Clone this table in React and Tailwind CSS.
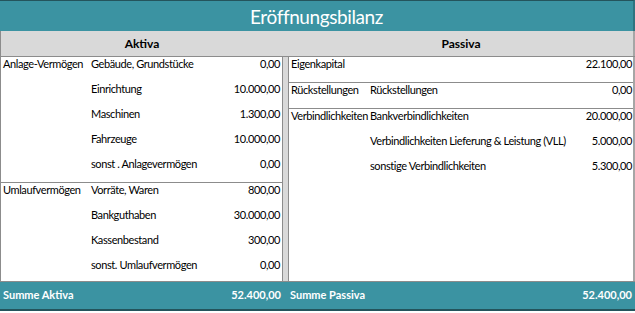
import React from "react";

const aktiva = [
  { group: "Anlage-Vermögen", items: [
    ["Gebäude, Grundstücke", "0,00"],
    ["Einrichtung", "10.000,00"],
    ["Maschinen", "1.300,00"],
    ["Fahrzeuge", "10.000,00"],
    ["sonst . Anlagevermögen", "0,00"],
  ]},
  { group: "Umlaufvermögen", items: [
    ["Vorräte, Waren", "800,00"],
    ["Bankguthaben", "30.000,00"],
    ["Kassenbestand", "300,00"],
    ["sonst. Umlaufvermögen", "0,00"],
  ]},
];

const passiva = [
  { group: "Eigenkapital", items: [["", "22.100,00"]] },
  { group: "Rückstellungen", items: [["Rückstellungen", "0,00"]] },
  { group: "Verbindlichkeiten", items: [
    ["Bankverbindlichkeiten", "20.000,00"],
    ["Verbindlichkeiten Lieferung & Leistung (VLL)", "5.000,00"],
    ["sonstige Verbindlichkeiten", "5.300,00"],
  ]},
];

export default function App() {
  return (
    <div className="w-[635px] h-[313px] bg-white text-[11px] text-black overflow-hidden" style={{ fontFamily: "Lato, 'Open Sans', sans-serif" }}>
      <div className="h-[31px] bg-[#3b93a2] border-t border-[#24545c] border-r-2 border-r-[#2f7480] flex items-center justify-center text-white text-[19px] tracking-[-0.4px] leading-none">
        Eröffnungsbilanz
      </div>
      <div className="h-[25px] bg-[#d9d9d9] flex items-center font-bold text-[12px] border-l border-[#8c8c8c] border-r-2 border-r-[#a6a6a6]">
        <div className="w-[282px] text-center">Aktiva</div>
        <div className="w-[6px]" />
        <div className="flex-1 text-center">Passiva</div>
      </div>
      <div className="h-[225px] flex border-t border-[#8c8c8c] bg-[#d9d9d9] tracking-[-0.4px]">
        <div className="w-[283px] bg-white border-l border-r border-[#8c8c8c] flex flex-col">
          {aktiva.map((g, i) => (
            <div key={i} className={"flex " + (i === 0 ? "" : "border-t border-[#8c8c8c]")}>
              <div className="shrink-0 w-[90px] pl-[2px] leading-[13px]">{g.group}</div>
              <div className="flex-1 flex flex-col">
                {g.items.map(([a, b], j) => (
                  <div key={j} className="h-[25px] flex justify-between leading-[13px] pr-[2px]">
                    <span>{a}</span>
                    <span>{b}</span>
                  </div>
                ))}
              </div>
            </div>
          ))}
        </div>
        <div className="w-[5px]" />
        <div className="flex-1 bg-white border-l border-[#8c8c8c] border-r-2 border-r-[#a6a6a6] flex flex-col">
          {passiva.map((g, i) => (
            <div key={i} className={"flex " + (i === 0 ? "" : "border-t border-[#8c8c8c]")}>
              <div className="shrink-0 w-[81px] pl-[2px] leading-[13px]">{g.group}</div>
              <div className="flex-1 flex flex-col">
                {g.items.map(([a, b], j) => (
                  <div key={j} className="h-[25px] flex justify-between leading-[13px] pr-[1px]">
                    <span>{a}</span>
                    <span>{b}</span>
                  </div>
                ))}
              </div>
            </div>
          ))}
        </div>
      </div>
      <div className="h-[30px] bg-[#3b93a2] border-t border-[#8c8c8c] border-b-2 border-b-[#24545c] flex items-center text-white font-bold">
        <div className="w-[283px] flex justify-between pl-[3px] pr-[2px]">
          <span>Summe Aktiva</span>
          <span>52.400,00</span>
        </div>
        <div className="w-[6px]" />
        <div className="flex-1 flex justify-between pl-[1px] pr-[3px]">
          <span>Summe Passiva</span>
          <span>52.400,00</span>
        </div>
      </div>
    </div>
  );
}
